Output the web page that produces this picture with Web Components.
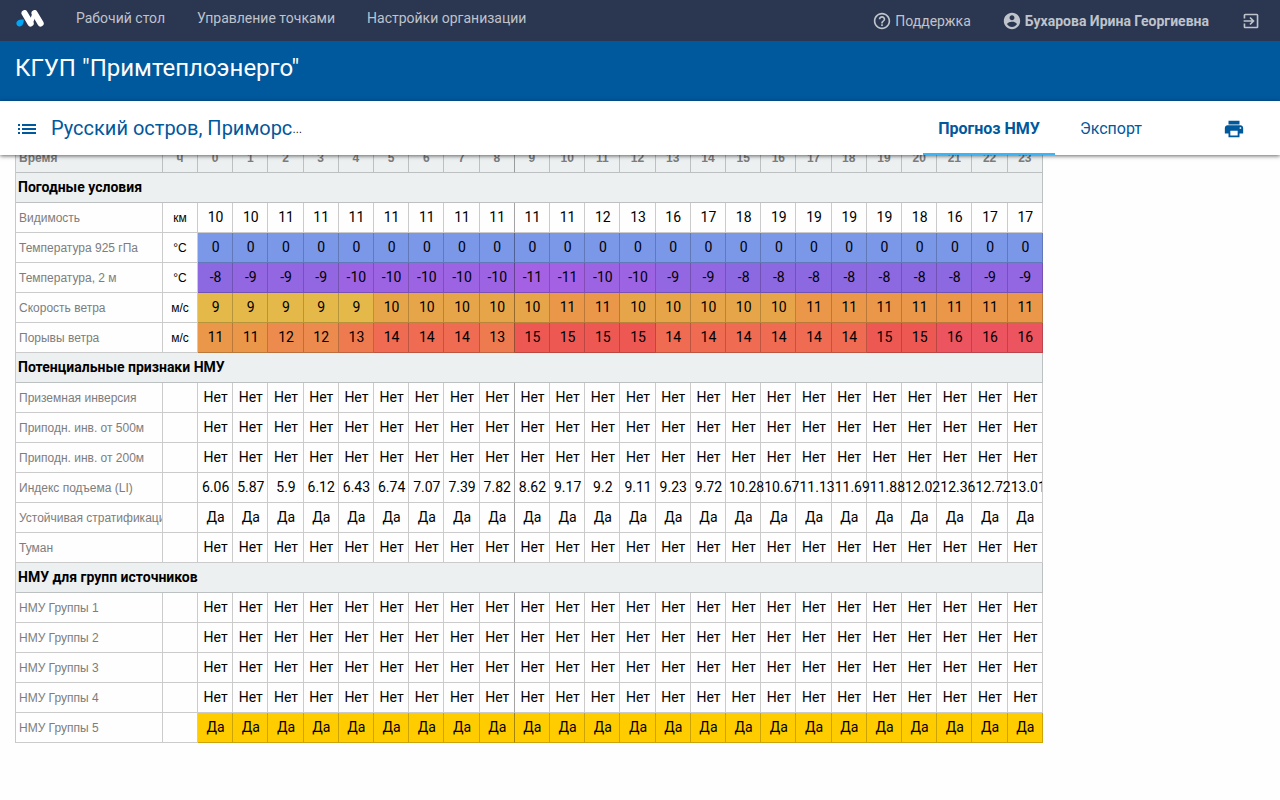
<!DOCTYPE html>
<html lang="ru">
<head>
<meta charset="utf-8">
<meta name="viewport" content="width=device-width, initial-scale=1">
<title>Прогноз НМУ</title>
<style>
body { margin: 0; background: #fefefe; font: 14px/20px Roboto, sans-serif; }
</style>
</head>
<body>
<forecast-app></forecast-app>
<script>
const define = (name, html, setup) => {
  const template = document.createElement('template');
  template.innerHTML = html;
  customElements.define(name, class extends HTMLElement {
    connectedCallback() {
      if (this.shadowRoot) return;
      this.attachShadow({ mode: 'open' }).append(template.content.cloneNode(true));
      if (setup) setup(this, this.shadowRoot);
    }
  });
};

define('top-nav', `
<style>
:host { display: block; background: #2b3651; color: #bfc3cb; }
.bar { display: flex; align-items: center; height: 41px; padding: 0 20px 0 16px; box-sizing: border-box; }
nav { display: flex; gap: 32px; margin-left: 32px; padding-bottom: 6px; }
a { display: flex; align-items: center; color: inherit; text-decoration: none; white-space: nowrap; }
svg { display: block; flex: none; }
.logo { padding-bottom: 4px; }
.user { display: flex; gap: 32px; margin-left: auto; align-items: center; }
.user a { gap: 4px; }
.user a:last-child { margin-left: 1px; }
b { font-weight: 700; }
</style>
<div class="bar">
  <a class="logo" href="#" aria-label="Главная">
    <svg width="28" height="17" viewBox="0 0 28 17"><path d="M1.2 11.2C2.4 9.8 4.6 9.6 7.8 9.6c0 3.600-1.300 6.900-4.100 6.900C.8 16.500-.7 13.400 1.200 11.200z" fill="#00a7f5"/><path d="M8.600 3.200l6 10.200M18.600 3.200l6 10.200" stroke="#fff" stroke-width="6.200" stroke-linecap="round"/><path d="M14.600 13.400l4-10.200" stroke="#fff" stroke-width="4"/></svg>
  </a>
  <nav>
    <a href="#">Рабочий стол</a>
    <a href="#">Управление точками</a>
    <a href="#">Настройки организации</a>
  </nav>
  <div class="user">
    <a href="#"><svg width="18" height="18" viewBox="1 1 22 22" fill="currentColor"><path d="M11 18h2v-2h-2v2zm1-16C6.480 2 2 6.480 2 12s4.480 10 10 10 10-4.480 10-10S17.520 2 12 2zm0 18c-4.410 0-8-3.590-8-8s3.590-8 8-8 8 3.590 8 8-3.590 8-8 8zm0-14c-2.210 0-4 1.790-4 4h2c0-1.100.9-2 2-2s2 .9 2 2c0 2-3 1.750-3 5h2c0-2.250 3-2.500 3-5 0-2.210-1.790-4-4-4z"/></svg>Поддержка</a>
    <a href="#"><svg width="18" height="18" viewBox="1 1 22 22" fill="currentColor"><path d="M12 2C6.480 2 2 6.480 2 12s4.480 10 10 10 10-4.480 10-10S17.520 2 12 2zm0 3c1.660 0 3 1.340 3 3s-1.340 3-3 3-3-1.340-3-3 1.340-3 3-3zm0 14.200c-2.500 0-4.710-1.280-6-3.220.03-1.990 4-3.080 6-3.080 1.990 0 5.970 1.090 6 3.080-1.290 1.940-3.500 3.220-6 3.220z"/></svg><b>Бухарова Ирина Георгиевна</b></a>
    <a href="#" aria-label="Выйти"><svg width="18" height="18" viewBox="1 1 22 22" fill="currentColor"><path d="M10.090 15.590L11.500 17l5-5-5-5-1.410 1.410L12.670 11H3v2h9.670l-2.580 2.590zM19 3H5c-1.110 0-2 .9-2 2v4h2V5h14v14H5v-4H3v4c0 1.100.89 2 2 2h14c1.100 0 2-.9 2-2V5c0-1.100-.9-2-2-2z"/></svg></a>
  </div>
</div>`);

define('org-banner', `
<style>
:host { display: block; background: #00589d; color: #fff; }
h1 { margin: 0; padding: 12px 15px 18px; font-size: 24px; line-height: 30px; font-weight: 400; }
</style>
<h1><slot></slot></h1>`);

define('point-bar', `
<style>
:host { display: block; position: relative; z-index: 1; background: #fff; color: #00589d; box-shadow: 0 1px 4px rgba(0,0,0,.6); }
.bar { display: flex; align-items: stretch; height: 54px; padding-right: 35px; }
button { display: flex; align-items: center; border: 0; background: none; padding: 0; color: inherit; cursor: pointer; }
.menu { padding: 2px 14px 0 18px; }
.place { flex: 0 1 260px; min-width: 0; margin: 0; font-size: 20px; line-height: 54px; font-weight: 400; white-space: nowrap; }
.place i { font-style: normal; color: #000; font-family: "Liberation Sans", sans-serif; font-size: 10px; line-height: 10px; vertical-align: middle; }
nav { display: flex; gap: 10px; margin-left: auto; }
nav a { padding: 0 15px; font-size: 16px; line-height: 55px; color: inherit; text-decoration: none; box-sizing: border-box; height: 54px; }
nav a[aria-current] { font-weight: 700; border-bottom: 2px solid #3db5f5; }
.print { margin-left: 66px; padding-top: 2px; }
svg { display: block; }
</style>
<div class="bar">
  <button class="menu" aria-label="Список точек"><svg width="19" height="12" viewBox="0 0 19 12" fill="currentColor"><path d="M0 1h2v2H0zM0 5h2v2H0zM0 9h2v2H0zM4 1h14v2H4zM4 5h14v2H4zM4 9h14v2H4z"/></svg></button>
  <h2 class="place">Русский остров, Приморс<i>…</i></h2>
  <nav><a href="#" aria-current="page">Прогноз НМУ</a><a href="#">Экспорт</a></nav>
  <button class="print" aria-label="Печать"><svg width="22" height="22" viewBox="0 0 24 24" fill="currentColor"><path d="M19 8H5c-1.660 0-3 1.340-3 3v6h4v4h12v-4h4v-6c0-1.660-1.340-3-3-3zm-3 11H8v-5h8v5zm3-7c-.55 0-1-.45-1-1s.45-1 1-1 1 .45 1 1-.45 1-1 1zm-1-9H6v4h12V3z"/></svg></button>
</div>`);

const same = (text) => Array(24).fill(text);
const list = (text) => text.split(' ');
const SCALES = {
  upper: { 0: '#7a97e8' },
  air: { '-8': '#8c68e1', '-9': '#9367e2', '-10': '#9c64e3', '-11': '#a561e4' },
  wind: { 9: '#e4b94a', 10: '#e7a549', 11: '#ea974a', 12: '#ed8a4e', 13: '#ee7b50', 14: '#ef6b52', 15: '#ee5852', 16: '#ec555f' },
  alert: { 'Да': '#ffcc00' }
};
const SECTIONS = [
  { title: 'Погодные условия', rows: [
    ['Видимость', 'км', list('10 10 11 11 11 11 11 11 11 11 11 12 13 16 17 18 19 19 19 19 18 16 17 17')],
    ['Температура 925 гПа', '°C', same('0'), 'upper'],
    ['Температура, 2 м', '°C', list('-8 -9 -9 -9 -10 -10 -10 -10 -10 -11 -11 -10 -10 -9 -9 -8 -8 -8 -8 -8 -8 -8 -9 -9'), 'air'],
    ['Скорость ветра', 'м/с', list('9 9 9 9 9 10 10 10 10 10 11 11 10 10 10 10 10 11 11 11 11 11 11 11'), 'wind'],
    ['Порывы ветра', 'м/с', list('11 11 12 12 13 14 14 14 13 15 15 15 15 14 14 14 14 14 14 15 15 16 16 16'), 'wind']
  ] },
  { title: 'Потенциальные признаки НМУ', rows: [
    ['Приземная инверсия', '', same('Нет')],
    ['Приподн. инв. от 500м', '', same('Нет')],
    ['Приподн. инв. от 200м', '', same('Нет')],
    ['Индекс подъема (LI)', '', list('6.06 5.87 5.9 6.12 6.43 6.74 7.07 7.39 7.82 8.62 9.17 9.2 9.11 9.23 9.72 10.28 10.67 11.13 11.69 11.88 12.02 12.36 12.72 13.01')],
    ['Устойчивая стратификация', '', same('Да')],
    ['Туман', '', same('Нет')]
  ] },
  { title: 'НМУ для групп источников', rows: [
    ['НМУ Группы 1', '', same('Нет')],
    ['НМУ Группы 2', '', same('Нет')],
    ['НМУ Группы 3', '', same('Нет')],
    ['НМУ Группы 4', '', same('Нет')],
    ['НМУ Группы 5', '', same('Да'), 'alert']
  ] }
];

define('forecast-table', `
<style>
:host { display: block; }
table { width: 1028px; table-layout: fixed; border-collapse: separate; border-spacing: 0; border-left: 1px solid #c6c9ca; color: #000; }
.label { width: 147px; }
.unit { width: 35px; }
th, td { box-sizing: border-box; height: 30px; padding: 0; border: 0 solid rgba(0,0,0,.2); border-width: 0 1px 1px 0; text-align: center; white-space: nowrap; font-weight: 400; line-height: 28px; }
.narrow { font-family: "Liberation Sans Narrow", "Arial Narrow", "Liberation Sans", sans-serif; font-size: 12px; padding-top: 1px; }
tbody th { text-align: left; padding-left: 3px; overflow: hidden; color: #7d7d7d; }
thead th { background: #ecf0f1; color: #7d7d7d; font-weight: 700; }
thead th:first-child { text-align: left; padding-left: 3px; }
th.section { background: #ecf0f1; color: #000; font-weight: 700; padding: 0 0 1px 2px; }
tr > :nth-child(11) { border-right-color: rgba(0,0,0,.35); }
td:last-child { overflow: hidden; }
td.value { padding: 0 0 1px 1px; }
td.wide { text-align: left; padding-left: 3px; }
</style>
<table>
  <colgroup><col class="label"><col class="unit"><col span="24"></colgroup>
  <thead><tr></tr></thead>
</table>`, (host, root) => {
  const table = root.querySelector('table');
  const cell = (row, tag, text, cls, scope) => {
    const el = document.createElement(tag);
    el.textContent = text;
    if (cls) el.className = cls;
    if (scope) el.scope = scope;
    row.append(el);
    return el;
  };
  const head = root.querySelector('thead tr');
  cell(head, 'th', 'Время', 'narrow', 'col');
  cell(head, 'th', 'ч', 'narrow', 'col');
  for (let h = 0; h < 24; h++) cell(head, 'th', h, 'narrow', 'col');
  for (const { title, rows } of SECTIONS) {
    const body = table.createTBody();
    cell(body.insertRow(), 'th', title, 'section', 'rowgroup').colSpan = 26;
    for (const [label, unit, values, scale] of rows) {
      const row = body.insertRow();
      cell(row, 'th', label, 'narrow', 'row');
      cell(row, 'td', unit, 'narrow');
      for (const value of values) {
        const el = cell(row, 'td', value, value.length > 4 ? 'value wide' : 'value');
        if (scale) el.style.background = SCALES[scale][value];
      }
    }
  }
});

define('forecast-app', `
<style>
:host { display: flex; flex-direction: column; height: 100vh; }
main { flex: 1; min-height: 0; overflow: hidden; padding: 0 15px; }
forecast-table { margin-top: -12px; }
</style>
<top-nav></top-nav>
<org-banner>КГУП "Примтеплоэнерго"</org-banner>
<point-bar></point-bar>
<main><forecast-table></forecast-table></main>`);
</script>
</body>
</html>
